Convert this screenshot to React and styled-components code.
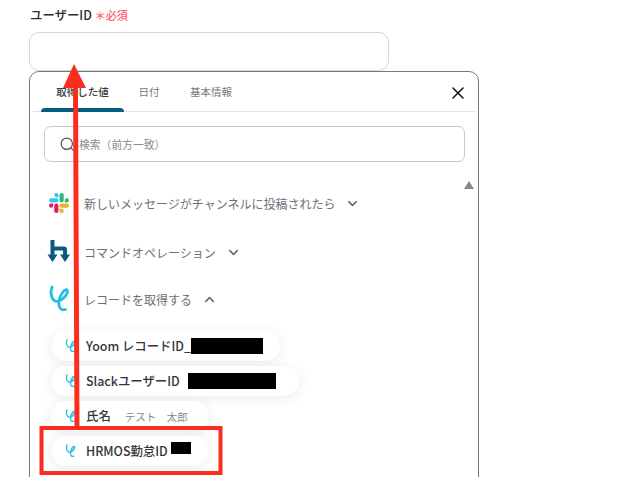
import React from "react";
import styled, { createGlobalStyle } from "styled-components";
import { ChevronDown, ChevronUp, Search, X } from "lucide-react";

const GlobalStyle = createGlobalStyle`
  html, body {
    margin: 0;
    padding: 0;
    background: #fff;
    overflow: hidden;
  }
  * {
    box-sizing: border-box;
  }
`;

const Page = styled.div`
  position: relative;
  width: 637px;
  height: 477px;
  overflow: hidden;
  padding: 7px 0 0 29px;
  font-family: "Noto Sans CJK JP", "Noto Sans", sans-serif;
  color: #2c2c33;
`;

const FieldLabel = styled.div`
  display: flex;
  align-items: center;
  gap: 3px;
  height: 16px;
  padding-left: 1px;
  font-size: 12.4px;
  font-weight: 500;
`;

const Required = styled.span`
  display: flex;
  align-items: center;
  gap: 1px;
  color: #f8606c;
  font-size: 11px;
`;

const TextInput = styled.div`
  width: 360px;
  height: 39px;
  margin-top: 9px;
  border: 1px solid #d5d6e3;
  border-radius: 10px;
  background: #fff;
`;

const Panel = styled.div`
  width: 450px;
  height: 440px;
  padding: 0 3px;
  border: 1px solid #77777c;
  border-radius: 10px;
  background: #fff;
`;

const TabBar = styled.div`
  display: flex;
  align-items: stretch;
  height: 40px;
  padding-left: 8px;
  border-bottom: 1px solid #e2e2e6;
`;

const Tab = styled.div`
  position: relative;
  display: flex;
  align-items: center;
  justify-content: center;
  width: ${(p) => p.$width}px;
  padding-bottom: 1px;
  font-size: 10.5px;
  font-weight: ${(p) => (p.$active ? 500 : 400)};
  color: ${(p) => (p.$active ? "#3a3a40" : "#77777d")};

  &::after {
    content: "";
    display: ${(p) => (p.$active ? "block" : "none")};
    position: absolute;
    left: 0;
    right: 0;
    bottom: -1px;
    height: 4px;
    border-radius: 4px 4px 0 0;
    background: #045d81;
  }
`;

const CloseButton = styled.div`
  display: flex;
  align-items: center;
  justify-content: center;
  width: 20px;
  height: 20px;
  margin: 11px 7px 0 auto;
  color: #111;
`;

const SearchBox = styled.div`
  display: flex;
  align-items: center;
  gap: 3px;
  width: 421px;
  height: 36px;
  margin: 14px 0 0 11px;
  padding-left: 14px;
  border: 1px solid #c9c9cd;
  border-radius: 7px;
  font-size: 10.8px;
  color: #8a8a8f;
`;

const SearchIcon = styled(Search)`
  color: #55555b;
  flex: none;
`;

const ScrollArea = styled.div`
  position: relative;
  margin-top: 28px;
  padding-left: 13px;
  display: flex;
  flex-direction: column;
`;

const ScrollUp = styled.div`
  position: absolute;
  top: -9px;
  right: 1px;
  width: 0;
  height: 0;
  border-left: 5px solid transparent;
  border-right: 5px solid transparent;
  border-bottom: 8px solid #88888c;
`;

const Section = styled.div`
  display: flex;
  align-items: center;
  height: 26px;
  margin-top: ${(p) => p.$gap}px;
  font-size: 12px;
  color: #6e6e74;
`;

const SectionIcon = styled.div`
  display: flex;
  align-items: center;
  justify-content: center;
  flex: none;
  width: 26px;
  height: 26px;
  margin-right: 12px;
`;

const Chevron = styled.span`
  display: flex;
  margin-left: 10px;
  color: #66666c;
`;

const Pills = styled.div`
  display: flex;
  flex-direction: column;
  align-items: flex-start;
  gap: 5px;
  margin: 19px 0 0 5px;
`;

const Pill = styled.div`
  display: flex;
  align-items: center;
  width: ${(p) => p.$width}px;
  height: 30px;
  padding-left: 14px;
  border-radius: 15px;
  background: #fff;
  box-shadow: 0 2px 12px rgba(60, 60, 90, 0.1);
  font-size: 12.4px;
  font-weight: 500;
  color: #35353b;
  white-space: nowrap;
`;

const PillName = styled.span`
  margin-left: 10px;
`;

const PillValue = styled.span`
  margin-left: 14px;
  font-size: 10.5px;
  font-weight: 400;
  color: #85858b;
  white-space: pre;
`;

const Redacted = styled.span`
  display: block;
  flex: none;
  width: ${(p) => p.$width}px;
  height: ${(p) => p.$height}px;
  margin-left: ${(p) => p.$left}px;
  margin-top: ${(p) => p.$top || 0}px;
  background: #000;
`;

const Annotation = styled.svg`
  position: absolute;
  top: 0;
  left: 0;
  pointer-events: none;
`;

function SlackLogo() {
  return (
    <svg width="20" height="20" viewBox="0 0 122.8 122.8">
      <path fill="#e01e5a" d="M25.8 77.6a12.9 12.9 0 1 1-12.9-12.9h12.9zM32.3 77.6a12.9 12.9 0 0 1 25.8 0v32.3a12.9 12.9 0 0 1-25.8 0z" />
      <path fill="#36c5f0" d="M45.2 25.8a12.9 12.9 0 1 1 12.9-12.9v12.9zM45.2 32.3a12.9 12.9 0 0 1 0 25.8H12.9a12.9 12.9 0 0 1 0-25.8z" />
      <path fill="#2eb67d" d="M97 45.2a12.9 12.9 0 1 1 12.9 12.9H97zM90.5 45.2a12.9 12.9 0 0 1-25.8 0V12.9a12.9 12.9 0 0 1 25.8 0z" />
      <path fill="#ecb22e" d="M77.6 97a12.9 12.9 0 1 1-12.9 12.9V97zM77.6 90.5a12.9 12.9 0 0 1 0-25.8h32.3a12.9 12.9 0 0 1 0 25.8z" />
    </svg>
  );
}

function CommandLogo() {
  return (
    <svg width="24" height="26" viewBox="0 0 24 26">
      <path fill="#0b5a7d" d="M3.5 1h4v6.5H17a3 3 0 0 1 3 3V16h-4v-4.5H7.5V16h-4z" />
      <path fill="#0b5a7d" d="M0.5 15.5h10L5.5 23zM13 15.5h10L18 23z" />
    </svg>
  );
}

function LoopLogo({ size = 22 }) {
  return (
    <svg width={size} height={size * 1.25} viewBox="0 0 22 27.5" fill="none">
      <path
        stroke="#22bfe3"
        strokeWidth="2.8"
        strokeLinecap="round"
        strokeLinejoin="round"
        d="M4 2C2 7 3 13.5 7 16c4.5 1.5 11-3.5 12.5-9C20 4 17 4 15 7c-3 4-4.500 9-4 13 .5 4 3 5.500 6.500 4.500"
      />
    </svg>
  );
}

const sections = [
  { name: "新しいメッセージがチャンネルに投稿されたら", icon: <SlackLogo />, gap: 0 },
  { name: "コマンドオペレーション", icon: <CommandLogo />, gap: 23 },
  { name: "レコードを取得する", icon: <LoopLogo />, gap: 21, open: true },
];

function App() {
  return (
    <>
      <GlobalStyle />
      <Page>
        <FieldLabel>
          ユーザーID
          <Required>＊必須</Required>
        </FieldLabel>
        <TextInput />
        <Panel>
          <TabBar>
            <Tab $width={83} $active>取得した値</Tab>
            <Tab $width={50}>日付</Tab>
            <Tab $width={74}>基本情報</Tab>
            <CloseButton>
              <X size={20} strokeWidth={1.8} />
            </CloseButton>
          </TabBar>
          <SearchBox>
            <SearchIcon size={17} strokeWidth={1.7} />
            検索（前方一致）
          </SearchBox>
          <ScrollArea>
            <ScrollUp />
            {sections.map((s) => (
              <Section key={s.name} $gap={s.gap}>
                <SectionIcon>{s.icon}</SectionIcon>
                {s.name}
                <Chevron>
                  {s.open ? <ChevronUp size={15} strokeWidth={2.4} /> : <ChevronDown size={15} strokeWidth={2.4} />}
                </Chevron>
              </Section>
            ))}
            <Pills>
              <Pill $width={229}>
                <LoopLogo size={11} />
                <PillName>Yoom レコードID_</PillName>
                <Redacted $width={72} $height={16} $left={0} />
              </Pill>
              <Pill $width={248}>
                <LoopLogo size={11} />
                <PillName>SlackユーザーID</PillName>
                <Redacted $width={88} $height={16} $left={8} />
              </Pill>
              <Pill $width={158}>
                <LoopLogo size={11} />
                <PillName>氏名</PillName>
                <PillValue>テスト　太郎</PillValue>
              </Pill>
              <Pill $width={158}>
                <LoopLogo size={11} />
                <PillName>HRMOS勤怠ID</PillName>
                <Redacted $width={20} $height={12} $left={3} $top={-6} />
              </Pill>
            </Pills>
          </ScrollArea>
        </Panel>
        <Annotation width="637" height="477" viewBox="0 0 637 477">
          <polygon fill="#fa2d1e" points="74,64 86,88 78,88 79.5,428 74.5,428 73,88 63,88" />
          <rect x="41.5" y="428" width="179" height="45" fill="none" stroke="#fa2d1e" strokeWidth="4" />
        </Annotation>
      </Page>
    </>
  );
}

export default App;
